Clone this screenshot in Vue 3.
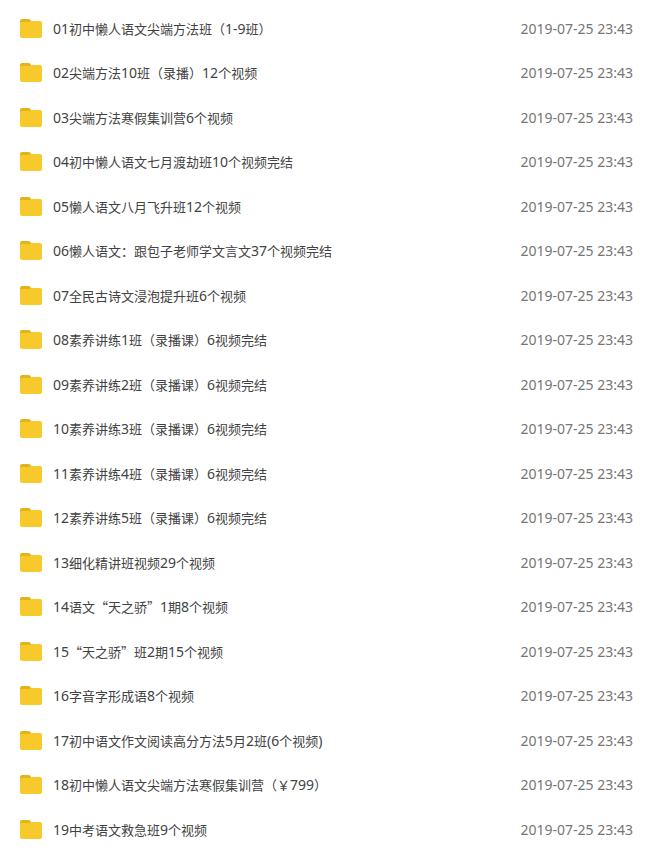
<script setup>
const modified = '2019-07-25 23:43'

const names = [
  '01初中懒人语文尖端方法班（1-9班）',
  '02尖端方法10班（录播）12个视频',
  '03尖端方法寒假集训营6个视频',
  '04初中懒人语文七月渡劫班10个视频完结',
  '05懒人语文八月飞升班12个视频',
  '06懒人语文：跟包子老师学文言文37个视频完结',
  '07全民古诗文浸泡提升班6个视频',
  '08素养讲练1班（录播课）6视频完结',
  '09素养讲练2班（录播课）6视频完结',
  '10素养讲练3班（录播课）6视频完结',
  '11素养讲练4班（录播课）6视频完结',
  '12素养讲练5班（录播课）6视频完结',
  '13细化精讲班视频29个视频',
  '14语文“天之骄”1期8个视频',
  '15“天之骄”班2期15个视频',
  '16字音字形成语8个视频',
  '17初中语文作文阅读高分方法5月2班(6个视频)',
  '18初中懒人语文尖端方法寒假集训营（￥799）',
  '19中考语文救急班9个视频',
]

// Latin and Chinese runs are set in different faces.
const files = names.map((name) => ({
  name,
  runs: name.match(/[\x20-\x7e]+|[^\x20-\x7e]+/g).map((text) => ({
    text,
    latin: /^[\x20-\x7e]/.test(text),
  })),
}))
</script>

<template>
  <main class="files">
    <ul class="list">
      <li v-for="file in files" :key="file.name" class="row">
        <svg class="folder" viewBox="0 0 22 19" aria-hidden="true">
          <path d="M0 8V2Q0 0 2 0H8.5Q9.7 0 10.4 1L12 3V8Z" fill="#e0b51c" />
          <path d="M0 4Q0 3 1.2 3H8.5Q9.5 3 10.3 2.5Q11 2 12 2H20Q22 2 22 4V17Q22 19 20 19H2Q0 19 0 17Z" fill="#f8c92b" />
        </svg>
        <span class="name"><span v-for="(run, i) in file.runs" :key="i" :class="{ latin: run.latin }">{{ run.text }}</span></span>
        <time class="date" datetime="2019-07-25T23:43">{{ modified }}</time>
      </li>
    </ul>
  </main>
</template>

<style>
body {
  margin: 0;
  background: #fff;
}
</style>

<style scoped>
.files {
  padding: 7px 14px 0 20px;
  font-family: "Noto Sans CJK SC", sans-serif;
  font-size: 13px;
  line-height: 20px;
  color: #424242;
}

.list {
  margin: 0;
  padding: 0;
  list-style: none;
}

.row {
  display: flex;
  align-items: center;
  padding: 12px 0;
}

.row:nth-child(even) {
  padding-bottom: 13px;
}

.row:last-child {
  padding-bottom: 8px;
}

.folder {
  flex: none;
  width: 22px;
  height: 19px;
  margin: -2px 11px 0 0;
}

.name {
  flex: 1;
  min-width: 0;
  height: 20px;
  white-space: nowrap;
}

.latin,
.date {
  font-family: "Noto Sans", sans-serif;
  font-size: 14px;
}

.date {
  flex: none;
  color: #757575;
}
</style>
